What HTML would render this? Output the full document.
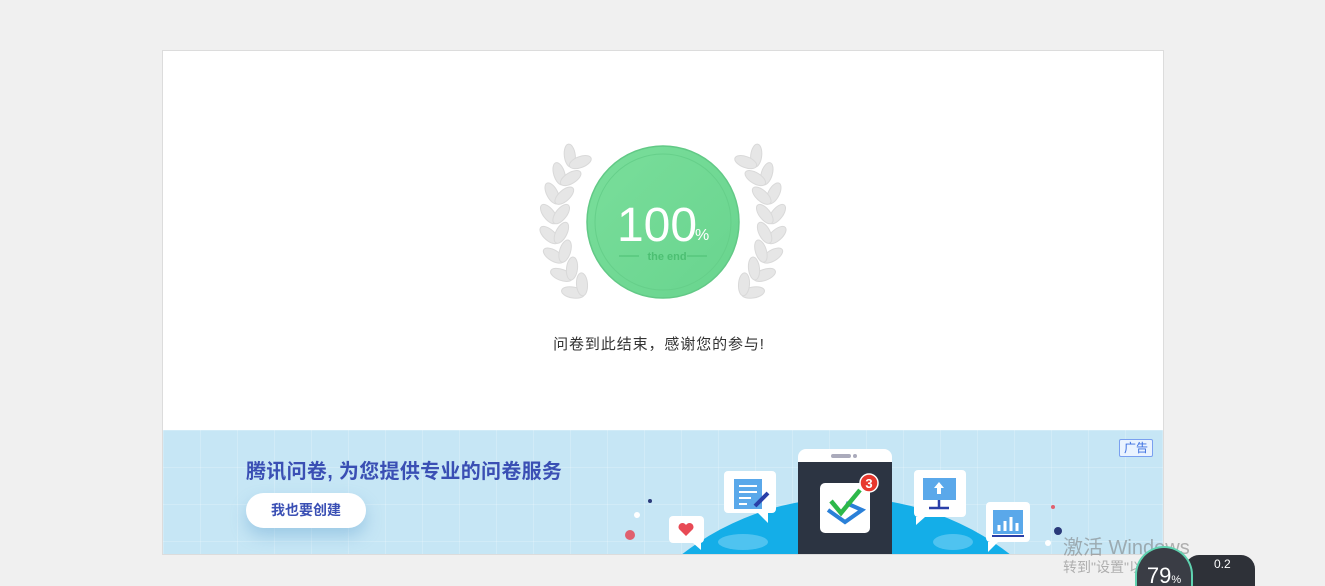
<!DOCTYPE html>
<html><head><meta charset="utf-8"><style>
*{margin:0;padding:0;box-sizing:border-box}
html,body{width:1325px;height:586px;overflow:hidden}
body{background:#f0f0f0;position:relative;font-family:"Liberation Sans","Noto Sans CJK SC",sans-serif}
.card{position:absolute;left:162px;top:50px;width:1002px;height:505px;background:#fff;border:1px solid #dcdcdc;overflow:hidden}
.msg{position:absolute;left:0;width:100%;top:282px;text-align:center;font-size:15px;letter-spacing:0.9px;color:#333;padding-right:8px}
.banner{position:absolute;left:0;top:379px;width:1000px;height:125px;background:#c6e6f5;overflow:hidden;
background-image:linear-gradient(rgba(255,255,255,.2) 1px,transparent 1px),linear-gradient(90deg,rgba(255,255,255,.2) 1px,transparent 1px);background-size:37px 37px}
.t1{position:absolute;left:83px;top:25px;font-size:20px;font-weight:bold;color:#3a4fb4;letter-spacing:.3px}
.btn{position:absolute;left:83px;top:63px;width:120px;height:35px;border-radius:18px;background:#fff;color:#3a4fb4;font-size:14px;font-weight:bold;text-align:center;line-height:35px;box-shadow:0 8px 16px rgba(80,150,200,.35)}
.ad{position:absolute;left:956px;top:9px;width:34px;height:18px;border:1px solid #7aa0f0;background:#eaf3ff;color:#3a6ee0;font-size:12px;text-align:center;line-height:16px;border-radius:2px}
.wm{position:absolute;left:1063px;top:531px;color:rgba(120,120,120,.55);font-size:20px}
.wm2{position:absolute;left:1063px;top:557px;color:rgba(120,120,120,.55);font-size:14px}
</style></head><body>
<div class="card">
<svg width="1002" height="380" style="position:absolute;left:0;top:0">
<defs><linearGradient id="g" x1="0" y1="0" x2="1" y2="1"><stop offset="0" stop-color="#7ade9b"/><stop offset="1" stop-color="#68d48e"/></linearGradient></defs>
<g id="leaves"></g>
<circle cx="500" cy="171" r="76" fill="url(#g)" stroke="#62c986" stroke-width="1.5"/>
<circle cx="500" cy="171" r="68" fill="none" stroke="#66cf8a" stroke-width="1"/>
<text x="494" y="190" text-anchor="middle" font-family="Liberation Sans" font-size="48" fill="#fff">100</text>
<text x="532" y="189" font-family="Liberation Sans" font-size="16" fill="#fff">%</text>
<text x="504" y="209" text-anchor="middle" font-family="Liberation Sans" font-size="11" fill="#4cbf72" font-weight="bold">the end</text>
<line x1="456" y1="205" x2="476" y2="205" stroke="#4cbf72"/><line x1="524" y1="205" x2="544" y2="205" stroke="#4cbf72"/>
</svg>
<div class="msg">问卷到此结束，感谢您的参与!</div>
<div class="banner">
<div class="t1">腾讯问卷, 为您提供专业的问卷服务</div>
<div class="btn">我也要创建</div>
<div class="ad">广告</div>
<svg width="1000" height="125" style="position:absolute;left:0;top:0">
<circle cx="683" cy="335" r="267" fill="#14aee8"/>
<ellipse cx="580" cy="112" rx="25" ry="8" fill="#4fc3f0"/><ellipse cx="790" cy="112" rx="20" ry="8" fill="#4fc3f0"/>
<circle cx="467" cy="105" r="5" fill="#e0606e"/><circle cx="474" cy="85" r="3" fill="#fff"/><circle cx="487" cy="71" r="2" fill="#2a3a7a"/>
<circle cx="895" cy="101" r="4" fill="#2a3a7a"/><circle cx="890" cy="77" r="2" fill="#e0606e"/><circle cx="885" cy="113" r="3" fill="#fff"/>
<rect x="635" y="19" width="94" height="110" rx="8" fill="#fff"/>
<rect x="635" y="32" width="94" height="100" fill="#2c3442"/>
<rect x="668" y="24" width="20" height="4" rx="2" fill="#aab"/><circle cx="692" cy="26" r="2" fill="#aab"/>
<rect x="657" y="53" width="50" height="50" rx="5" fill="#fff"/>
<path d="M665 80 L682 92 L699 80 L683 73" fill="none" stroke="#2a80d8" stroke-width="4"/>
<path d="M668 71 L678 83 L697 60" fill="none" stroke="#2db84a" stroke-width="4.5"/>
<circle cx="706" cy="53" r="9" fill="#e8382e" stroke="#fff" stroke-width="1.5"/>
<text x="706" y="58" text-anchor="middle" font-size="13" fill="#fff" font-weight="bold">3</text>
<rect x="561" y="41" width="52" height="42" rx="4" fill="#fff"/><path d="M595 83 L605 93 L605 83Z" fill="#fff"/>
<rect x="571" y="49" width="28" height="30" fill="#5aa8ea"/>
<path d="M576 56h18M576 62h18M576 68h12M576 74h8" stroke="#fff" stroke-width="2"/>
<path d="M592 76 L605 63" stroke="#2a3fa8" stroke-width="4"/>
<rect x="506" y="86" width="35" height="27" rx="4" fill="#fff"/><path d="M530 113 L538 120 L538 110Z" fill="#fff"/>
<path d="M523 106 L516 99 a3.5 3.5 0 0 1 7 -4 a3.5 3.5 0 0 1 7 4Z" fill="#e84a55"/>
<rect x="751" y="40" width="52" height="47" rx="4" fill="#fff"/><path d="M753 87 L753 95 L762 87Z" fill="#fff"/>
<rect x="760" y="48" width="33" height="22" fill="#5aa8ea"/><path d="M776 52 L771 58 H774 V64 H778 V58 H781Z" fill="#fff"/>
<path d="M776 70 V77 M766 78 H786" stroke="#2a3fa8" stroke-width="2.5"/>
<rect x="823" y="72" width="44" height="40" rx="4" fill="#fff"/><path d="M825 112 L825 122 L835 112Z" fill="#fff"/>
<rect x="830" y="80" width="30" height="24" fill="#5aa8ea"/>
<path d="M836 101v-6M842 101v-10M848 101v-14M854 101v-8" stroke="#fff" stroke-width="3"/>
<path d="M829 106 H861" stroke="#2a3fa8" stroke-width="2"/>
</svg>
</div>
</div>
<div class="wm">激活 Windows</div>
<div class="wm2">转到"设置"以激活 Windows。</div>
<div style="position:absolute;left:1185px;top:555px;width:70px;height:31px;border-radius:14px 14px 0 0;background:#2e3138"></div>
<div style="position:absolute;left:1135px;top:546px;width:58px;height:40px;border-radius:29px 29px 0 0;background:#3a3d45;border:2px solid #5fd3b0;border-bottom:none;color:#fff;font-size:22px;text-align:center;line-height:55px;overflow:hidden">79<span style="font-size:11px">%</span></div>
<div style="position:absolute;left:1214px;top:557px;color:#fff;font-size:12px">0.2</div>
<script>
var g=document.getElementById('leaves'),s='';
function leaf(x,y,deg){s+='<ellipse cx="'+x.toFixed(1)+'" cy="'+y.toFixed(1)+'" rx="11.5" ry="5.5" transform="rotate('+deg.toFixed(1)+' '+x.toFixed(1)+' '+y.toFixed(1)+')" fill="#e6e6e6" stroke="#d9d9d9"/>';}
var R=108,cx=500,cy=171;
for(var i=0;i<8;i++){var th=(222-i*10.5)*Math.PI/180;
var px=cx+R*Math.cos(th),py=cy-R*Math.sin(th);
var tx=Math.sin(th),ty=Math.cos(th);var base=Math.atan2(ty,tx)*180/Math.PI;
[-38,38].forEach(function(o){var a=(base+o)*Math.PI/180;var x=px+Math.cos(a)*10,y=py+Math.sin(a)*10;var d=base+o;
leaf(x,y,d);leaf(1000-x,y,180-d);});}
g.innerHTML=s;
</script>
</body></html>
